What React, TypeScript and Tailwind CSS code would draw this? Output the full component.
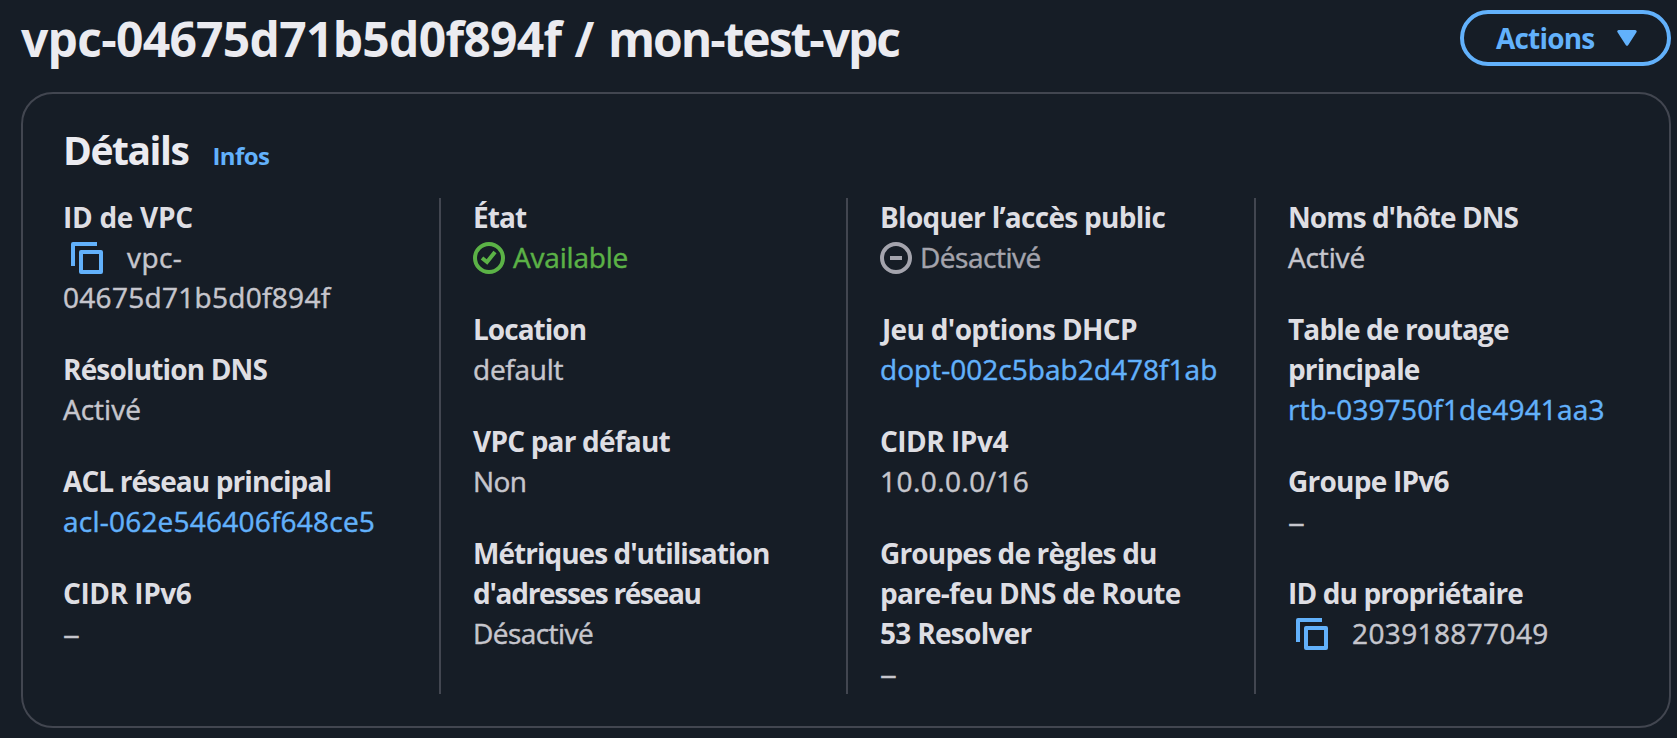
import type { ReactNode } from 'react';

function CopyIcon() {
  return (
    <svg viewBox="0 0 32 32" className="mr-6 ml-2 size-8 shrink-0 text-[#62b1fb]" fill="none" stroke="currentColor" strokeWidth="4" strokeLinejoin="round">
      <path d="M26 2H2v22" />
      <path d="M10 10h20v20H10z" />
    </svg>
  );
}

function CheckIcon() {
  return (
    <svg viewBox="0 0 32 32" className="mr-2 size-8 shrink-0" fill="none" stroke="currentColor" strokeWidth="4">
      <circle cx="16" cy="16" r="14" />
      <path d="m9 16 5 4 8-10" />
    </svg>
  );
}

function MinusIcon() {
  return (
    <svg viewBox="0 0 32 32" className="mr-2 size-8 shrink-0" fill="none" stroke="currentColor" strokeWidth="4">
      <circle cx="16" cy="16" r="14" />
      <path d="M10 16h12" />
    </svg>
  );
}

function Line({ children, className = '' }: { children: ReactNode; className?: string }) {
  return <span className={`block whitespace-nowrap ${className}`}>{children}</span>;
}

function Dash() {
  return <span className="inline-block origin-left scale-x-[1.2]">–</span>;
}

function Field({ label, children }: { label: ReactNode; children: ReactNode }) {
  return (
    <div>
      <dt className="font-bold text-[#dedee3]">{label}</dt>
      <dd className="text-[#c6c6cd] [-webkit-text-stroke-width:0.45px]">{children}</dd>
    </div>
  );
}

function Column({ children, divided = true }: { children: ReactNode; divided?: boolean }) {
  return (
    <div className={divided ? 'border-l-2 border-[#424650] pl-8' : ''}>
      <dl className="-mt-px flex flex-col gap-8 text-[28px] leading-10">{children}</dl>
    </div>
  );
}

function Link({ children, className = '' }: { children: ReactNode; className?: string }) {
  return (
    <a href="#" className={`block whitespace-nowrap text-[#62b1fb] ${className}`}>
      {children}
    </a>
  );
}

export default function App() {
  return (
    <main className="flex h-[738px] w-[1677px] flex-col bg-[#161d26] pt-[10px] pr-1.5 pl-[21px] font-['Open_Sans','Noto_Sans',sans-serif]">
      <header className="flex h-[82px] items-start justify-between">
        <h1 className="-mt-px text-[48px] leading-[60px] font-bold whitespace-nowrap text-[#ebebf0]">
          <span className="tracking-[-0.72px]">vpc-04675d71b5d0f894f</span>
          <span className="tracking-[0.6px]"> / </span>
          <span className="tracking-[-2.05px]">mon-test-vpc</span>
        </h1>
        <button className="flex h-14 w-[211px] items-center rounded-full border-4 border-[#62b1fb] pl-8 text-[28px] leading-10 font-bold text-[#62b1fb]">
          <span className="tracking-[-0.8px]">Actions</span>
          <svg viewBox="0 0 20 16" className="ml-[23px] h-4 w-5" fill="currentColor" stroke="currentColor" strokeWidth="3" strokeLinejoin="round">
            <path d="M1.8 1.5h16.4L10 14.3z" />
          </svg>
        </button>
      </header>

      <section className="h-[636px] rounded-[32px] border-2 border-[#424650] pl-10">
        <div className="flex h-[104px] items-baseline pt-[28px]">
          <h2 className="text-[39px] leading-[56px] font-bold tracking-[-1.45px] text-[#ebebf0]">Détails</h2>
          <a href="#" className="ml-6 text-[24px] font-bold tracking-[-0.6px] text-[#62b1fb]">
            Infos
          </a>
        </div>

        <div className="grid h-[496px] grid-cols-[376px_407px_408px_1fr]">
          <Column divided={false}>
            <Field label={<Line className="tracking-[-0.29px]">ID de VPC</Line>}>
              <span className="flex h-10 items-center pt-0.5">
                <CopyIcon />
                <span className="-mt-0.5 tracking-[0.4px]">vpc-</span>
              </span>
              <Line className="tracking-[0.3px]">04675d71b5d0f894f</Line>
            </Field>
            <Field label={<Line className="tracking-[-0.84px]">Résolution DNS</Line>}>Activé</Field>
            <Field label={<Line className="tracking-[-0.9px]">ACL réseau principal</Line>}>
              <Link className="tracking-[0.22px]">acl-062e546406f648ce5</Link>
            </Field>
            <Field label={<Line className="tracking-[-0.45px]">CIDR IPv6</Line>}>
              <Dash />
            </Field>
          </Column>

          <Column>
            <Field label={<Line className="tracking-[-0.9px]">État</Line>}>
              <span className="flex h-10 items-center pt-0.5 text-[#5bb246]">
                <CheckIcon />
                <span className="-mt-0.5 tracking-[-0.2px]">Available</span>
              </span>
            </Field>
            <Field label={<Line className="tracking-[-0.97px]">Location</Line>}>
              <Line className="tracking-[-0.25px]">default</Line>
            </Field>
            <Field label={<Line className="tracking-[-0.8px]">VPC par défaut</Line>}>
              <Line className="tracking-[-0.6px]">Non</Line>
            </Field>
            <Field
              label={
                <>
                  <Line className="tracking-[-0.98px]">Métriques d'utilisation</Line>
                  <Line className="tracking-[-1.29px]">d'adresses réseau</Line>
                </>
              }
            >
              <Line className="tracking-[-0.55px]">Désactivé</Line>
            </Field>
          </Column>

          <Column>
            <Field label={<Line className="tracking-[-0.71px]">Bloquer l’accès public</Line>}>
              <span className="flex h-10 items-center pt-0.5 text-[#a4a4ad]">
                <MinusIcon />
                <span className="-mt-0.5 tracking-[-0.48px]">Désactivé</span>
              </span>
            </Field>
            <Field label={<Line className="pl-0.5 tracking-[-0.67px]">Jeu d'options DHCP</Line>}>
              <Link className="tracking-[0.03px]">dopt-002c5bab2d478f1ab</Link>
            </Field>
            <Field label={<Line className="tracking-[-0.5px]">CIDR IPv4</Line>}>
              <Line className="tracking-[0.44px]">10.0.0.0/16</Line>
            </Field>
            <Field
              label={
                <>
                  <Line className="tracking-[-0.83px]">Groupes de règles du</Line>
                  <Line className="tracking-[-0.77px]">pare-feu DNS de Route</Line>
                  <Line className="tracking-[-0.7px]">53 Resolver</Line>
                </>
              }
            >
              <Dash />
            </Field>
          </Column>

          <Column>
            <Field label={<Line className="tracking-[-0.98px]">Noms d'hôte DNS</Line>}>
              <Line className="tracking-[-0.15px]">Activé</Line>
            </Field>
            <Field
              label={
                <>
                  <Line className="tracking-[-0.87px]">Table de routage</Line>
                  <Line className="tracking-[-0.85px]">principale</Line>
                </>
              }
            >
              <Link className="tracking-[0.17px]">rtb-039750f1de4941aa3</Link>
            </Field>
            <Field label={<Line className="tracking-[-0.76px]">Groupe IPv6</Line>}>
              <Dash />
            </Field>
            <Field label={<Line className="tracking-[-0.88px]">ID du propriétaire</Line>}>
              <span className="flex h-10 items-center pt-0.5">
                <CopyIcon />
                <span className="-mt-0.5 tracking-[0.38px]">203918877049</span>
              </span>
            </Field>
          </Column>
        </div>
      </section>
    </main>
  );
}
